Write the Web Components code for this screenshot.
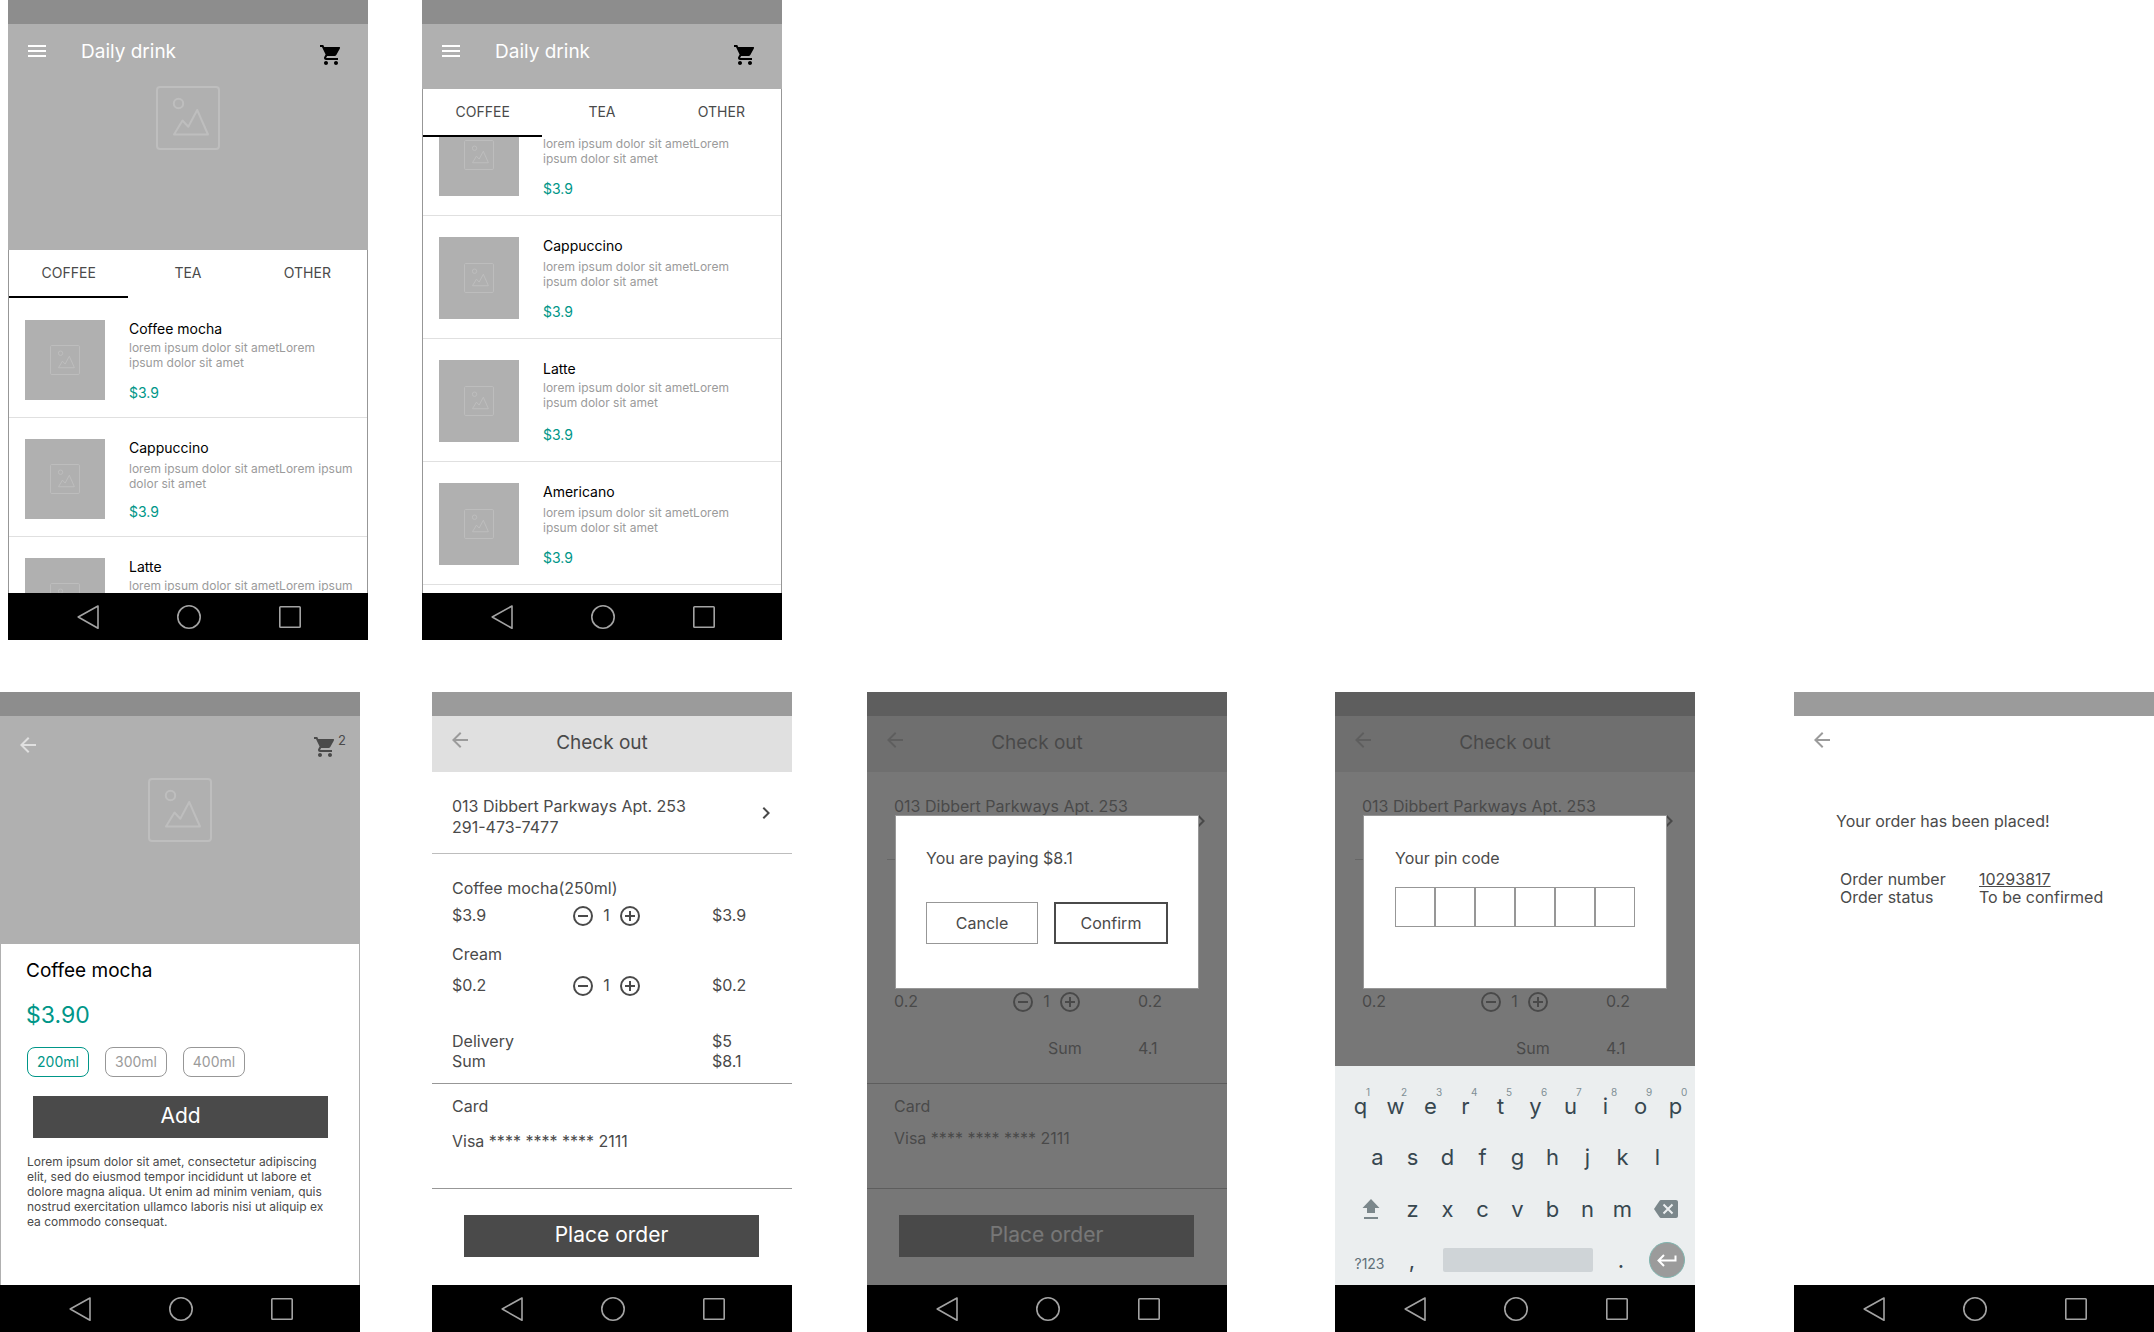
<!DOCTYPE html>
<html lang="en">
<head>
<meta charset="utf-8">
<title>Daily drink wireframes</title>
<style>
  body { margin: 0; background: #fff; font-family: Inter, "Liberation Sans", sans-serif; color: #4a4a4a; }
  .board { display: flex; flex-direction: column; gap: 52px; }
  .row { display: grid; align-items: start; }
  .menu-row { padding-left: 8px; grid-template-columns: minmax(360px, 414fr) minmax(360px, 1732fr); }
  .order-row { grid-template-columns: minmax(360px, 432fr) minmax(360px, 435fr) minmax(360px, 468fr) minmax(360px, 459fr) 360px; }
</style>
</head>
<body>
<main class="board">
  <section class="row menu-row">
    <wf-phone>
      <wf-hero><wf-topbar></wf-topbar></wf-hero>
      <wf-tabs></wf-tabs>
      <wf-list>
        <wf-item class="narrow" name="Coffee mocha" price="$3.9">lorem ipsum dolor sit ametLorem ipsum dolor sit amet</wf-item>
        <wf-item class="loose" name="Cappuccino" price="$3.9">lorem ipsum dolor sit ametLorem ipsum dolor sit amet</wf-item>
        <wf-item class="cut" name="Latte">lorem ipsum dolor sit ametLorem ipsum</wf-item>
      </wf-list>
    </wf-phone>
    <wf-phone>
      <wf-topbar class="solid"></wf-topbar>
      <wf-tabs></wf-tabs>
      <wf-list class="scrolled">
        <wf-item class="narrow loose" price="$3.9">lorem ipsum dolor sit ametLorem ipsum dolor sit amet</wf-item>
        <wf-item class="narrow loose" name="Cappuccino" price="$3.9">lorem ipsum dolor sit ametLorem ipsum dolor sit amet</wf-item>
        <wf-item class="narrow" name="Latte" price="$3.9">lorem ipsum dolor sit ametLorem ipsum dolor sit amet</wf-item>
        <wf-item class="narrow loose" name="Americano" price="$3.9">lorem ipsum dolor sit ametLorem ipsum dolor sit amet</wf-item>
      </wf-list>
    </wf-phone>
  </section>
  <section class="row order-row">
    <wf-phone>
      <wf-detail></wf-detail>
    </wf-phone>
    <wf-phone class="light">
      <wf-checkout></wf-checkout>
    </wf-phone>
    <wf-phone class="light dim">
      <wf-checkout-short></wf-checkout-short>
      <wf-pay-dialog slot="over"></wf-pay-dialog>
    </wf-phone>
    <wf-phone class="light dim">
      <wf-checkout-short class="keyed"></wf-checkout-short>
      <wf-pin-dialog slot="over"></wf-pin-dialog>
      <wf-keyboard slot="over"></wf-keyboard>
    </wf-phone>
    <wf-phone class="light">
      <wf-placed></wf-placed>
    </wf-phone>
  </section>
</main>
<script>
const base = `*,:host{box-sizing:border-box}
  button,input{font:inherit;color:inherit;background:none;border:0;padding:0;margin:0;border-radius:0}
  h1,h2,p,ul,dl,dd{margin:0;padding:0;font-weight:400}
  svg{display:block}`;

function define(tag, render) {
  customElements.define(tag, class extends HTMLElement {
    constructor() {
      super();
      this.attachShadow({ mode: 'open' });
    }
    connectedCallback() {
      this.shadowRoot.innerHTML = '<style>' + base + '</style>' + render(this);
    }
  });
}

const icons = {
  menu: '<path fill="currentColor" d="M3 18h18v-2H3v2zm0-5h18v-2H3v2zm0-7v2h18V6H3z"/>',
  cart: '<path fill="currentColor" d="M7 18c-1.1 0-1.99.9-1.99 2S5.9 22 7 22s2-.9 2-2-.9-2-2-2zM1 2v2h2l3.6 7.59-1.35 2.45c-.16.28-.25.61-.25.96 0 1.1.9 2 2 2h12v-2H7.42c-.14 0-.25-.11-.25-.25l.03-.12.9-1.63h7.45c.75 0 1.41-.41 1.75-1.03l3.58-6.49A1 1 0 0 0 20 4H5.21l-.94-2H1zm16 16c-1.1 0-1.99.9-1.99 2s.89 2 1.99 2 2-.9 2-2-.9-2-2-2z"/>',
  back: '<path fill="currentColor" d="M20 11H7.83l5.59-5.59L12 4l-8 8 8 8 1.41-1.41L7.83 13H20v-2z"/>',
  chevron: '<path fill="currentColor" d="M10 6L8.59 7.41 13.17 12l-4.58 4.59L10 18l6-6z"/>',
  minus: '<path fill="currentColor" d="M7 11v2h10v-2H7zm5-9a10 10 0 1 0 0 20 10 10 0 0 0 0-20zm0 18a8 8 0 1 1 0-16 8 8 0 0 1 0 16z"/>',
  plus: '<path fill="currentColor" d="M13 7h-2v4H7v2h4v4h2v-4h4v-2h-4V7zm-1-5a10 10 0 1 0 0 20 10 10 0 0 0 0-20zm0 18a8 8 0 1 1 0-16 8 8 0 0 1 0 16z"/>',
  shift: '<path fill="currentColor" d="M12 2L3.500 11H8v5h8v-5h4.500zM5 20h14v2H5z"/>',
  erase: '<path fill="currentColor" d="M22 3H7c-.69 0-1.230.350-1.590.880L0 12l5.410 8.110c.360.530.900.890 1.590.890h15c1.100 0 2-.900 2-2V5c0-1.100-.900-2-2-2z"/><path stroke="#ebeeef" stroke-width="2" fill="none" d="M9.500 7.500l9 9m0-9l-9 9"/>',
  enter: '<path fill="none" stroke="#fff" stroke-width="2" d="M20.500 7.500v5H4M9 7l-5.500 5.500L9 18"/>',
  navBack: '<path fill="none" stroke="currentColor" stroke-width="1.600" stroke-linejoin="round" d="M2.200 12L22 1v22.300z"/>',
  navHome: '<circle cx="12" cy="12" r="11.200" fill="none" stroke="currentColor" stroke-width="1.600"/>',
  navRecent: '<rect x="1.800" y="1.800" width="20.400" height="20.400" rx=".8" fill="none" stroke="currentColor" stroke-width="1.600"/>'
};

define('wf-icon', el => `<style>:host{display:block;flex:none;width:24px;height:24px}</style>
  <svg width="24" height="24" viewBox="0 0 24 24" aria-hidden="true">${icons[el.getAttribute('name')]}</svg>`);

/* Image placeholder: framed sun and mountains */
define('wf-picture', el => `<style>
  :host{display:block;flex:none;width:64px;height:64px;color:#bebebe}
  :host(.small){width:30px;height:30px}
  svg{width:100%;height:100%}</style>
  <svg viewBox="0 0 64 64" fill="none" stroke="currentColor" stroke-width="2" stroke-linejoin="round">
  <rect x="1" y="1" width="62" height="62" rx="3"/><circle cx="22.500" cy="17.500" r="4.700"/>
  <path d="M18 48.500L26.500 34.500 32.300 40.700 41.200 24 52 48.500z"/></svg>`);

define('wf-phone', () => `<style>
  :host{display:flex;flex-direction:column;width:360px;height:640px}
  .status{height:24px;flex:none;background:#8d8d8d}
  :host(.light) .status{background:#9b9b9b}
  .screen{position:relative;display:flex;flex-direction:column;flex:1;min-height:0}
  .page{flex:1;min-height:0;overflow:hidden;display:flex;flex-direction:column}
  .scrim{display:none}
  :host(.dim) .scrim{display:block;position:absolute;inset:0;background:rgba(74,74,74,.75)}
  nav{height:47px;flex:none;background:#000;color:#a3a3a3;display:flex;justify-content:space-between;align-items:center;padding:1px 66px 0 68px}
  </style>
  <div class="screen"><div class="status"></div><div class="page"><slot></slot></div><div class="scrim"></div><slot name="over"></slot></div>
  <nav><button aria-label="Back"><wf-icon name="navBack"></wf-icon></button><button aria-label="Home"><wf-icon name="navHome"></wf-icon></button><button aria-label="Recent apps"><wf-icon name="navRecent"></wf-icon></button></nav>`);

define('wf-topbar', () => `<style>
  :host{display:flex;align-items:flex-start;height:62px;padding:15px 25px 0 17px;color:#fff;flex:none}
  :host(.solid){height:65px;background:#b0b0b0}
  h1{font-size:19px;line-height:26px;margin-left:32px}
  .cart{color:#000;margin:4px 0 0 auto}</style>
  <button aria-label="Menu"><wf-icon name="menu"></wf-icon></button><h1>Daily drink</h1>
  <button class="cart" aria-label="Cart"><wf-icon name="cart"></wf-icon></button>`);

define('wf-hero', () => `<style>
  :host{display:flex;flex-direction:column;flex:none;height:226px;background:#b0b0b0}
  wf-picture{align-self:center}</style><slot></slot><wf-picture></wf-picture>`);

define('wf-tabs', () => `<style>
  :host{display:grid;grid-template-columns:repeat(3,1fr);height:48px;flex:none;border:solid #979797;border-width:0 1px}
  button{font-size:14px;line-height:20px;border-bottom:2px solid transparent}
  button[aria-selected=true]{border-color:#000}</style>
  <button role="tab" aria-selected="true">COFFEE</button><button role="tab" aria-selected="false">TEA</button><button role="tab" aria-selected="false">OTHER</button>`);

define('wf-list', () => `<style>
  :host{display:block;flex:1;min-height:0;overflow:hidden;border:solid #979797;border-width:0 1px;--thumb:80px}
  :host(.scrolled){--thumb:82px}
  .track{padding-top:1px}
  :host(.scrolled) .track{padding:0;margin-top:-44px}</style>
  <div class="track"><slot></slot></div>`);

define('wf-item', el => `<style>
  :host{display:flex;gap:24px;padding:21px 4px 17px 16px;border-bottom:1px solid #e0e0e0}
  :host-context(.scrolled){padding-bottom:19px}
  .thumb{width:80px;height:var(--thumb);background:#b0b0b0;display:flex;align-items:center;justify-content:center;flex:none}
  .text{display:flex;flex-direction:column;flex:1;height:var(--thumb)}
  h2{font-size:14px;line-height:18px;min-height:18px;color:#000}
  p{font-size:12px;line-height:15px;color:#9b9b9b;margin-top:2px}
  :host(.loose) p{margin-top:4px}
  :host(.narrow) p{max-width:200px}
  :host(.cut) p{height:13px;overflow:hidden;white-space:nowrap}
  .price{font-size:14px;line-height:14px;color:#009688;margin-top:auto}</style>
  <div class="thumb"><wf-picture class="small"></wf-picture></div>
  <div class="text"><h2>${el.getAttribute('name') || ''}</h2><p><slot></slot></p><span class="price">${el.getAttribute('price') || ''}</span></div>`);

define('wf-primary', () => `<style>
  :host{display:block;margin:0 33px 0 32px}
  button{display:block;width:100%;height:42px;background:#4a4a4a;color:#fff;font-size:21px;line-height:26px;padding-bottom:2px}</style>
  <button><slot></slot></button>`);

define('wf-detail', () => `<style>
  :host{display:flex;flex-direction:column;flex:1}
  .hero{display:flex;flex-direction:column;height:228px;background:#b0b0b0;flex:none}
  .bar{display:flex;align-items:flex-start;height:62px;padding:17px 14px 0 16px}
  .back{color:#e0e0e0}
  .cart{display:flex;align-items:flex-start;margin:2px 0 0 auto}
  .cart span{font-size:13px;line-height:10px;margin-left:1px}
  wf-picture{align-self:center}
  .info{flex:1;border:solid #b0b0b0;border-width:0 1px;padding:14px 0 0}
  h1{font-size:19px;line-height:26px;color:#000;margin-left:25px}
  .price{font-size:23px;line-height:30px;color:#009688;margin:16px 0 17px 25px}
  .sizes{display:flex;gap:16px;margin:0 0 19px 26px}
  .sizes button{width:62px;height:30px;border:1px solid #979797;border-radius:8px;font-size:14px;line-height:20px;color:#9b9b9b;padding-bottom:1px}
  .sizes button[aria-pressed=true]{color:#009688;border-color:#009688}
  wf-primary{margin:0 31px 0 32px}
  .about{font-size:12px;line-height:15px;margin:16px 30px 0 26px}</style>
  <div class="hero"><div class="bar"><button class="back" aria-label="Back"><wf-icon name="back"></wf-icon></button>
  <button class="cart" aria-label="Cart"><wf-icon name="cart"></wf-icon><span>2</span></button></div><wf-picture></wf-picture></div>
  <div class="info"><h1>Coffee mocha</h1><p class="price">$3.90</p>
  <div class="sizes"><button aria-pressed="true">200ml</button><button aria-pressed="false">300ml</button><button aria-pressed="false">400ml</button></div>
  <wf-primary>Add</wf-primary>
  <p class="about">Lorem ipsum dolor sit amet, consectetur adipiscing elit, sed do eiusmod tempor incididunt ut labore et dolore magna aliqua. Ut enim ad minim veniam, quis nostrud exercitation ullamco laboris nisi ut aliquip ex ea commodo consequat.</p></div>`);

define('wf-backbar', () => `<style>
  :host{display:flex;align-items:flex-start;height:56px;flex:none;padding:12px 60px 0 16px}
  button{color:#9b9b9b}
  h1{flex:1;text-align:center;font-size:19px;line-height:26px;margin-top:2px}</style>
  <button aria-label="Back"><wf-icon name="back"></wf-icon></button><h1><slot></slot></h1>`);

define('wf-stepper', () => `<style>
  :host{display:flex;width:71px;justify-content:space-between;line-height:22px}</style>
  <button aria-label="Less"><wf-icon name="minus"></wf-icon></button><span>1</span><button aria-label="More"><wf-icon name="plus"></wf-icon></button>`);

const sheet = `
  :host{display:flex;flex-direction:column;flex:1;font-size:16px;line-height:20px}
  wf-backbar{background:#e0e0e0}
  section{border-bottom:1px solid #979797;flex:none}
  .line{display:grid;grid-template-columns:119px 141px 1fr;line-height:22px}
  .sum{display:grid;grid-template-columns:260px 1fr}
  .address{display:flex;align-items:center;justify-content:space-between;padding-right:14px;border-color:#bdbdbd}
  .address p{align-self:flex-start;line-height:21px;padding-top:24px}
  .card{height:105px;padding-top:12px}
  wf-primary{margin-top:26px}`;

define('wf-checkout', () => `<style>${sheet}
  section{padding-left:20px}
  .address{height:82px}
  .items{height:230px;padding-top:24px}
  .a{margin:6px 0 16px}.b{margin:10px 0 33px}
  .card p+p{margin-top:15px}</style>
  <wf-backbar>Check out</wf-backbar>
  <section class="address"><p>013 Dibbert Parkways Apt. 253<br>291-473-7477</p><button aria-label="Change address"><wf-icon name="chevron"></wf-icon></button></section>
  <section class="items"><p>Coffee mocha(250ml)</p>
  <div class="line a"><span>$3.9</span><wf-stepper></wf-stepper><span>$3.9</span></div>
  <p>Cream</p>
  <div class="line b"><span>$0.2</span><wf-stepper></wf-stepper><span>$0.2</span></div>
  <div class="sum"><span>Delivery</span><span>$5</span><span>Sum</span><span>$8.1</span></div></section>
  <section class="card"><p>Card</p><p>Visa **** **** **** 2111</p></section>
  <wf-primary>Place order</wf-primary>`);

/* The "keyed" variant ends after the sum: the keyboard takes the rest of the screen */
define('wf-checkout-short', el => `<style>${sheet}
  section{padding-left:27px}
  .address{height:88px;margin:0 30px 0 20px;padding:0 0 0 7px}
  .address button{margin:10px -16px 0 0}
  .items{height:224px;padding-top:130px}
  .line{grid-template-columns:117px 127px 1fr;margin-bottom:24px}
  .sum{grid-template-columns:154px 90px 1fr}
  .sum span:first-child{grid-column:2}
  .card p+p{margin-top:12px}</style>
  <wf-backbar>Check out</wf-backbar>
  <section class="address"><p>013 Dibbert Parkways Apt. 253</p><button aria-label="Change address"><wf-icon name="chevron"></wf-icon></button></section>
  <section class="items"><div class="line"><span>0.2</span><wf-stepper></wf-stepper><span>0.2</span></div>
  <div class="sum"><span>Sum</span><span>4.1</span></div></section>
  ${el.classList.contains('keyed') ? '' : `<section class="card"><p>Card</p><p>Visa **** **** **** 2111</p></section>
  <wf-primary>Place order</wf-primary>`}`);

const dialog = `:host{position:absolute;left:28px;top:123px;width:304px;height:174px;background:#fff;border:1px solid #979797;
  padding:32px 30px;font-size:16px;line-height:20px}`;

define('wf-pay-dialog', () => `<style>${dialog}
  div{display:flex;gap:16px;margin-top:34px}
  button{flex:1;height:42px;border:1px solid #979797}
  .go{border:2px solid #4a4a4a}</style>
  <p>You are paying $8.1</p><div><button>Cancle</button><button class="go">Confirm</button></div>`);

define('wf-pin-dialog', () => `<style>${dialog}
  :host{padding-left:31px}
  .pin{display:flex;margin-top:19px}
  input{width:40px;height:40px;border:1px solid #979797;text-align:center}</style>
  <p id="pin">Your pin code</p><div class="pin" role="group" aria-labelledby="pin">
  ${[1,2,3,4,5,6].map(n => `<input type="text" maxlength="1" aria-label="Digit ${n}">`).join('')}</div>`);

define('wf-keyboard', () => {
  const keys = s => [...s].map(c => `<button>${c}</button>`).join('');
  const top = [...'qwertyuiop'].map((c, i) => `<button>${c}<small>${(i + 1) % 10}</small></button>`).join('');
  return `<style>
  :host{position:absolute;left:0;right:0;bottom:0;height:219px;background:#ebeeef;color:#37474f;padding-top:14px;font-size:22px;line-height:26px}
  div{display:flex;height:51px;align-items:stretch;padding-left:8px}
  button{width:35px;flex:none;position:relative;display:flex;align-items:center;justify-content:center}
  small{position:absolute;left:23px;top:6px;font-size:10px;line-height:12px;color:#7f8f95}
  .mid{padding-left:25px}
  .low{padding-left:12px;margin-top:1px}
  .low .fn{width:48px;color:#7b878b}
  .low .fn:last-child{width:52px}
  .end{align-items:center}
  .num{width:53px;font-size:14px;line-height:20px;padding-top:8px;color:#607078}
  .comma{width:32px;margin-right:15px}
  .space{width:150px;height:24px;border-radius:2px;background:#cfd4d7}
  .dot{width:56px}
  .enter{width:36px;height:36px;border-radius:50%;background:#9b9b9b;border:1px solid #80b5af}</style>
  <div>${top}</div><div class="mid">${keys('asdfghjkl')}</div>
  <div class="low"><button class="fn" aria-label="Shift"><wf-icon name="shift"></wf-icon></button>${keys('zxcvbnm')}<button class="fn" aria-label="Delete"><wf-icon name="erase"></wf-icon></button></div>
  <div class="end"><button class="num">?123</button><button class="comma">,</button><button class="space" aria-label="Space"></button><button class="dot">.</button><button class="enter" aria-label="Enter"><wf-icon name="enter"></wf-icon></button></div>`;
});

define('wf-placed', () => `<style>
  :host{display:block;font-size:16px;line-height:20px}
  p{padding:39px 0 39px 42px}
  dl{display:grid;grid-template-columns:139px 1fr;line-height:18px;padding-left:46px}
  a{color:inherit}</style>
  <wf-backbar></wf-backbar><p>Your order has been placed!</p>
  <dl><dt>Order number</dt><dd><a href="#order">10293817</a></dd><dt>Order status</dt><dd>To be confirmed</dd></dl>`);
</script>
</body>
</html>
